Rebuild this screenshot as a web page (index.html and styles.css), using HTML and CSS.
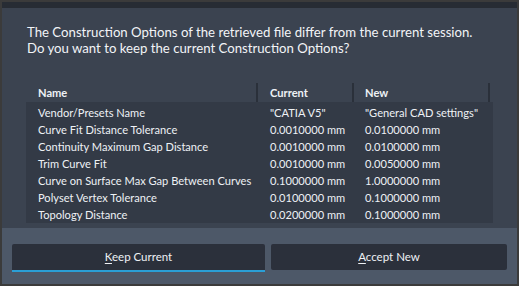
FILE: index.html
```html
<!DOCTYPE html>
<html>
<head>
<meta charset="utf-8">
<link rel="stylesheet" href="styles.css">
</head>
<body>
<div class="window">
  <div class="titlebar"></div>
  <div class="content">
    <p class="message">The Construction Options of the retrieved file differ from the current session.<br>Do you want to keep the current Construction Options?</p>
    <div class="table">
      <div class="thead">
        <div class="th">Name</div>
        <div class="th">Current</div>
        <div class="th">New</div>
        <div class="th filler"></div>
      </div>
      <div class="tbody">
        <div class="row"><span>Vendor/Presets Name</span><span>"CATIA V5"</span><span>"General CAD settings"</span></div>
        <div class="row"><span>Curve Fit Distance Tolerance</span><span>0.0010000 mm</span><span>0.0100000 mm</span></div>
        <div class="row"><span>Continuity Maximum Gap Distance</span><span>0.0010000 mm</span><span>0.0100000 mm</span></div>
        <div class="row"><span>Trim Curve Fit</span><span>0.0010000 mm</span><span>0.0050000 mm</span></div>
        <div class="row"><span>Curve on Surface Max Gap Between Curves</span><span>0.1000000 mm</span><span>1.0000000 mm</span></div>
        <div class="row"><span>Polyset Vertex Tolerance</span><span>0.0100000 mm</span><span>0.1000000 mm</span></div>
        <div class="row"><span>Topology Distance</span><span>0.0200000 mm</span><span>0.1000000 mm</span></div>
      </div>
    </div>
  </div>
  <div class="footer">
    <button class="btn primary"><u>K</u>eep Current</button>
    <button class="btn"><u>A</u>ccept New</button>
  </div>
</div>
</body>
</html>
```
FILE: styles.css
```css
* { box-sizing: border-box; }
html, body { margin: 0; padding: 0; }
body { background: #3a3a3a; font-family: Lato, "Open Sans", sans-serif; color: #eef1f5; }
.window {
  width: 519px; height: 286px;
  border: 2px solid #3b3b3b;
  display: flex; flex-direction: column;
  background: #3b4350;
}
.titlebar { height: 6px; background: #272c34; flex: none; }
.content { flex: 1; padding: 16px 24px 0 25px; }
.message {
  margin: 0; font-size: 13.2px; line-height: 16px; color: #f2f4f7;
  white-space: nowrap;
}
.table { margin-top: 27px; margin-left: -1px; width: 467px; font-size: 11.1px; }
.thead {
  display: grid; grid-template-columns: 232px 96px 136px 3px;
  height: 19px;
}
.th {
  font-weight: 700; line-height: 19px; padding-left: 12px;
  border-right: 2px solid #2a303a;
}
.th:nth-child(3) { padding-left: 11px; }
.th.filler { padding: 0; border-right: none; }
.tbody { background: #333a46; padding-top: 2px; }
.row {
  display: grid; grid-template-columns: 232px 96px 139px;
  height: 17px; line-height: 17px; white-space: nowrap;
}
.row span { padding-left: 12px; }
.row span:nth-child(3) { padding-left: 11px; }
.footer {
  height: 56px; flex: none; background: #4d5868;
  display: grid; grid-template-columns: 253px 236px; column-gap: 6px;
  padding: 16px 10px 0 10px;
  align-items: start;
}
.btn {
  height: 26px; border: none; border-radius: 2px;
  background: #2b303b; color: #eef1f5;
  font-family: Lato, "Open Sans", sans-serif; font-size: 11.5px;
  padding: 0; line-height: 26px;
}
.btn.primary { height: 28px; border-bottom: 2px solid #2a9fd6; border-radius: 2px 2px 0 0; line-height: 26px; }
.btn u { text-decoration-thickness: 1px; text-underline-offset: 2px; }
```
